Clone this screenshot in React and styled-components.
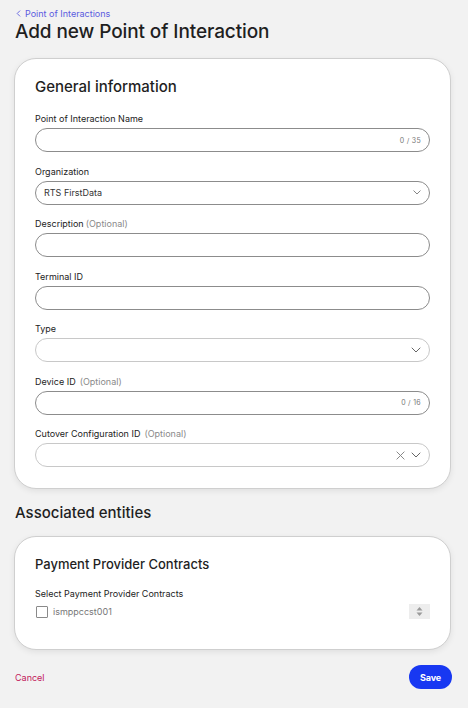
import React from 'react';
import styled, { createGlobalStyle } from 'styled-components';

const GlobalStyle = createGlobalStyle`
  html, body {
    margin: 0;
    padding: 0;
    background: #f2f2f2;
    font-family: Inter, "Liberation Sans", sans-serif;
    color: #1f1f1f;
  }
  * { box-sizing: border-box; }
`;

const Page = styled.div`
  padding: 7px 17px 20px 14px;
  min-height: 708px;
`;

const Breadcrumb = styled.a`
  display: flex;
  align-items: center;
  gap: 4px;
  font-size: 9px;
  color: #5b5be0;
  padding-left: 2px;
  text-decoration: none;
  height: 12px;
`;

const PageTitle = styled.h1`
  margin: 1px 0 0 1px;
  font-size: 19px;
  font-weight: 500;
  letter-spacing: -0.1px;
  line-height: 24px;
`;

const Card = styled.section`
  background: #fff;
  border: 1px solid #cfcfcf;
  border-radius: 22px;
  box-shadow: 0 2px 6px rgba(0, 0, 0, 0.08);
  padding: ${p => p.$pad || '18px 20px 21px 20px'};
  margin-top: ${p => p.$top || '0'};
`;

const CardTitle = styled.h2`
  margin: 0 0 ${p => p.$gap || '14px'} 0;
  font-size: ${p => p.$size || '15px'};
  font-weight: 500;
  line-height: 20px;
`;

const SectionTitle = styled.h2`
  margin: 14px 0 0 1px;
  font-size: 15px;
  font-weight: 500;
  line-height: 20px;
`;

const Field = styled.div`
  display: flex;
  flex-direction: column;
  gap: 4px;
  margin-bottom: 13.5px;
  &:last-child { margin-bottom: 0; }
`;

const Label = styled.label`
  display: block;
  font-size: 9px;
  line-height: 11px;
  color: #222;
`;

const Optional = styled.span`
  color: #8a8a8a;
  margin-left: ${p => p.$wide ? '4px' : '2px'};
`;

const InputBox = styled.div`
  height: 24px;
  border: 1px solid ${p => p.$light ? '#c8c8c8' : '#8c8c8c'};
  border-radius: 12px;
  background: #fff;
  display: flex;
  align-items: center;
  padding: 0 8px 0 8px;
  font-size: 9px;
  color: #333;
`;

const Value = styled.span`
  flex: 1;
`;

const Counter = styled.span`
  font-size: 7px;
  color: #777;
  letter-spacing: 0.3px;
`;

const Icons = styled.span`
  display: flex;
  align-items: center;
  gap: 6px;
  color: #666;
`;

const ContractRow = styled.div`
  display: flex;
  align-items: center;
  margin-top: 5px;
`;

const Checkbox = styled.span`
  width: 12px;
  height: 12px;
  border: 1px solid #8a8a8a;
  border-radius: 1px;
  margin-left: 1px;
  background: #fff;
`;

const CheckLabel = styled.span`
  flex: 1;
  font-size: 9px;
  color: #777;
  margin-left: 5px;
`;

const Stepper = styled.span`
  width: 21px;
  height: 15px;
  background: #ededed;
  display: flex;
  align-items: center;
  justify-content: center;
`;

const Footer = styled.div`
  display: flex;
  align-items: center;
  justify-content: space-between;
  margin-top: 15px;
`;

const Cancel = styled.button`
  border: none;
  background: none;
  padding: 0 0 0 1px;
  font-family: inherit;
  font-size: 9px;
  color: #c2185b;
  cursor: pointer;
`;

const Save = styled.button`
  border: none;
  background: #1838f2;
  color: #fff;
  font-family: inherit;
  font-weight: 700;
  font-size: 9px;
  letter-spacing: -0.2px;
  width: 43px;
  height: 24px;
  border-radius: 12px;
  margin-right: -1px;
  cursor: pointer;
`;

const Chevron = ({ size = 10 }) => (
  <svg width={size} height={size * 0.6} viewBox="0 0 10 6" fill="none">
    <path d="M1 1l4 4 4-4" stroke="#555" strokeWidth="0.9" strokeLinecap="round" strokeLinejoin="round" />
  </svg>
);

const Clear = () => (
  <svg width="9" height="9" viewBox="0 0 10 10" fill="none">
    <path d="M1 1l8 8M9 1l-8 8" stroke="#888" strokeWidth="1.1" strokeLinecap="round" />
  </svg>
);

const BackArrow = () => (
  <svg width="5" height="7" viewBox="0 0 5 8" fill="none">
    <path d="M4 1L1 4l3 3" stroke="#5b5be0" strokeWidth="1" strokeLinecap="round" strokeLinejoin="round" />
  </svg>
);

const StepArrows = () => (
  <svg width="7" height="11" viewBox="0 0 7 11">
    <path d="M3.5 1L6.5 4.5H0.5Z" fill="#9a9a9a" />
    <path d="M3.5 10L6.5 6.5H0.5Z" fill="#9a9a9a" />
  </svg>
);

const fields = [
  { label: 'Point of Interaction Name', counter: '0 / 35' },
  { label: 'Organization', value: 'RTS FirstData', select: true, small: true },
  { label: 'Description', optional: true },
  { label: 'Terminal ID' },
  { label: 'Type', select: true, light: true },
  { label: 'Device ID', optional: true, wide: true, counter: '0 / 16' },
  { label: 'Cutover Configuration ID', optional: true, wide: true, select: true, clear: true, light: true },
];

const App = () => (
  <>
    <GlobalStyle />
    <Page>
      <Breadcrumb href="#">
        <BackArrow />
        Point of Interactions
      </Breadcrumb>
      <PageTitle>Add new Point of Interaction</PageTitle>

      <Card $top="14px">
        <CardTitle $gap="16px">General information</CardTitle>
        {fields.map(f => (
          <Field key={f.label}>
            <Label>
              {f.label}
              {f.optional && <Optional $wide={f.wide}>(Optional)</Optional>}
            </Label>
            <InputBox $light={f.light}>
              <Value>{f.value}</Value>
              {f.counter && <Counter>{f.counter}</Counter>}
              {f.select && (
                <Icons>
                  {f.clear && <Clear />}
                  <Chevron size={f.small ? 8 : 10} />
                </Icons>
              )}
            </InputBox>
          </Field>
        ))}
      </Card>

      <SectionTitle>Associated entities</SectionTitle>

      <Card $top="13px" $pad="17px 20px 30px 20px">
        <CardTitle $size="13px" $gap="14px">Payment Provider Contracts</CardTitle>
        <Label>Select Payment Provider Contracts</Label>
        <ContractRow>
          <Checkbox />
          <CheckLabel>ismppccst001</CheckLabel>
          <Stepper>
            <StepArrows />
          </Stepper>
        </ContractRow>
      </Card>

      <Footer>
        <Cancel>Cancel</Cancel>
        <Save>Save</Save>
      </Footer>
    </Page>
  </>
);

export default App;
